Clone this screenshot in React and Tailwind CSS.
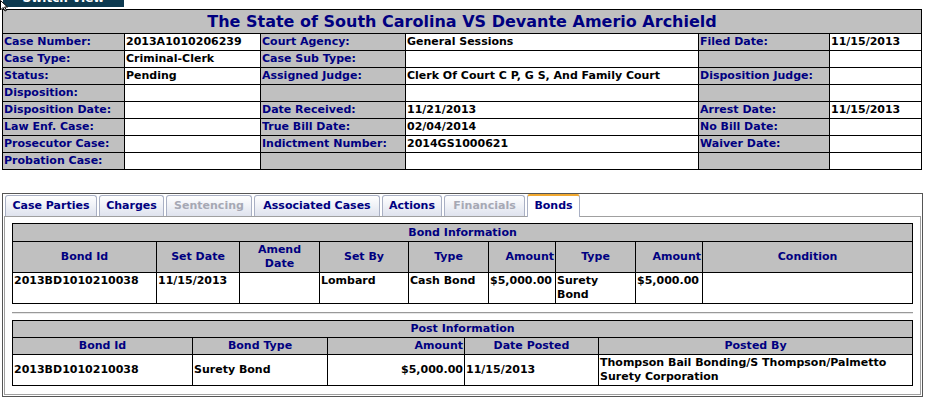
import React from "react";

const info = [
  ["Case Number:", "2013A1010206239", "Court Agency:", "General Sessions", "Filed Date:", "11/15/2013"],
  ["Case Type:", "Criminal-Clerk", "Case Sub Type:", "", "", ""],
  ["Status:", "Pending", "Assigned Judge:", "Clerk Of Court C P, G S, And Family Court", "Disposition Judge:", ""],
  ["Disposition:", "", "", "", "", ""],
  ["Disposition Date:", "", "Date Received:", "11/21/2013", "Arrest Date:", "11/15/2013"],
  ["Law Enf. Case:", "", "True Bill Date:", "02/04/2014", "No Bill Date:", ""],
  ["Prosecutor Case:", "", "Indictment Number:", "2014GS1000621", "Waiver Date:", ""],
  ["Probation Case:", "", "", "", "", ""],
];

const tabs = [
  { name: "Case Parties", w: "w-[92px]" },
  { name: "Charges", w: "w-[65px]" },
  { name: "Sentencing", w: "w-[86px]", disabled: true },
  { name: "Associated Cases", w: "w-[126px]" },
  { name: "Actions", w: "w-[60px]" },
  { name: "Financials", w: "w-[81px]", disabled: true },
  { name: "Bonds", w: "w-[53px]", active: true },
];

const cell = "border border-black px-[1px] py-[1px] leading-[14px] text-[11px] font-bold";
const label = cell + " bg-[#c0c0c0] text-[#000080]";
const value = cell + " bg-white text-black";
const head = "border border-black px-[1px] py-[1px] leading-[14px] text-[11px] font-bold bg-[#c0c0c0] text-[#000080]";

function Cursor() {
  return (
    <svg className="absolute left-0 top-0" width="8" height="12" viewBox="0 0 8 12">
      <path d="M0.5 0.5 L0.5 10 L3 7.5 L5 11 L6.5 10.3 L4.6 7 L7.5 7 Z" fill="white" stroke="black" strokeWidth="1" />
    </svg>
  );
}

function CaseInfo() {
  return (
    <table className="border-collapse table-fixed w-[919px] mt-[2px]">
      <colgroup>
        <col className="w-[122px]" />
        <col className="w-[136px]" />
        <col className="w-[145px]" />
        <col className="w-[293px]" />
        <col className="w-[131px]" />
        <col className="w-[92px]" />
      </colgroup>
      <tbody>
        <tr>
          <td colSpan={6} className="border border-black bg-[#c0c0c0] text-center text-[16px] font-bold leading-[21px] py-[1px] text-[#000080]">
            The State of South Carolina VS Devante Amerio Archield
          </td>
        </tr>
        {info.map((r, i) => (
          <tr key={i}>
            {r.map((c, j) => (
              <td key={j} className={j % 2 === 0 ? label : value}>
                <div className="h-[14px] whitespace-nowrap overflow-hidden">{c}</div>
              </td>
            ))}
          </tr>
        ))}
      </tbody>
    </table>
  );
}

function Tabs() {
  return (
    <div className="flex items-end gap-[2px] pl-[1px] h-[21px]">
      {tabs.map((t) =>
        t.active ? (
          <div
            key={t.name}
            className={
              t.w +
              " relative z-10 -mb-px h-[23px] pt-[2px] border border-b-0 border-[#a9b0c4] border-t-2 border-t-[#f0a830] rounded-t-[3px] bg-white text-center text-[11px] font-bold leading-[16px] text-[#000080]"
            }
          >
            {t.name}
          </div>
        ) : (
          <div
            key={t.name}
            className={
              t.w +
              " h-[21px] pt-[2px] border border-b-0 border-[#a9b0c4] rounded-t-[3px] bg-gradient-to-b from-white to-[#dfe3ee] text-center text-[11px] font-bold leading-[16px] " +
              (t.disabled ? "text-[#a6a8b4]" : "text-[#000080]")
            }
          >
            {t.name}
          </div>
        )
      )}
    </div>
  );
}

function BondTable() {
  const widths = ["w-[144px]", "w-[83px]", "w-[80px]", "w-[89px]", "w-[80px]", "w-[67px]", "w-[80px]", "w-[67px]", "w-[210px]"];
  return (
    <table className="border-collapse table-fixed w-[900px]">
      <colgroup>
        {widths.map((w, i) => (
          <col key={i} className={w} />
        ))}
      </colgroup>
      <tbody>
        <tr>
          <td colSpan={9} className={head + " text-center leading-[15px]"}>Bond Information</td>
        </tr>
        <tr>
          <td className={head + " text-center"}>Bond Id</td>
          <td className={head + " text-center"}>Set Date</td>
          <td className={head + " text-center"}>Amend<br />Date</td>
          <td className={head + " text-center"}>Set By</td>
          <td className={head + " text-center"}>Type</td>
          <td className={head + " text-right"}>Amount</td>
          <td className={head + " text-center"}>Type</td>
          <td className={head + " text-right"}>Amount</td>
          <td className={head + " text-center"}>Condition</td>
        </tr>
        <tr className="align-top">
          <td className={value + " h-[31px]"}>2013BD1010210038</td>
          <td className={value}>11/15/2013</td>
          <td className={value}></td>
          <td className={value}>Lombard</td>
          <td className={value}>Cash Bond</td>
          <td className={value}>$5,000.00</td>
          <td className={value}>Surety<br />Bond</td>
          <td className={value}>$5,000.00</td>
          <td className={value}></td>
        </tr>
      </tbody>
    </table>
  );
}

function PostTable() {
  const widths = ["w-[180px]", "w-[135px]", "w-[137px]", "w-[134px]", "w-[314px]"];
  return (
    <table className="border-collapse table-fixed w-[900px]">
      <colgroup>
        {widths.map((w, i) => (
          <col key={i} className={w} />
        ))}
      </colgroup>
      <tbody>
        <tr>
          <td colSpan={5} className={head + " text-center"}>Post Information</td>
        </tr>
        <tr>
          <td className={head + " text-center"}>Bond Id</td>
          <td className={head + " text-center"}>Bond Type</td>
          <td className={head + " text-right"}>Amount</td>
          <td className={head + " text-center"}>Date Posted</td>
          <td className={head + " text-center"}>Posted By</td>
        </tr>
        <tr className="align-middle">
          <td className={value + " h-[31px]"}>2013BD1010210038</td>
          <td className={value}>Surety Bond</td>
          <td className={value + " text-right"}>$5,000.00</td>
          <td className={value}>11/15/2013</td>
          <td className={value}>Thompson Bail Bonding/S Thompson/Palmetto Surety Corporation</td>
        </tr>
      </tbody>
    </table>
  );
}

export default function App() {
  return (
    <div className="relative w-[925px] h-[404px] overflow-hidden bg-white font-['DejaVu_Sans',Verdana,sans-serif] pl-[2px]">
      <div className="ml-[1px] w-[121px] h-[7px] bg-[#0e3a50] overflow-hidden text-center">
        <div className="-mt-[9px] text-[12px] leading-[14px] font-bold text-white">Switch View</div>
      </div>
      <Cursor />

      <CaseInfo />

      <div className="mt-[23px] w-[921px] border border-[#555] p-px">
        <Tabs />
        <div className="border border-[#a0a0a0] bg-white px-[7px] pt-[6px] pb-[8px]">
          <BondTable />
          <div className="mt-[8px] mb-[6px] border-t border-t-[#999] border-b border-b-[#e6e6e6]" />
          <PostTable />
        </div>
      </div>
      <div className="mt-[10px] border-t border-[#888]" />
    </div>
  );
}
